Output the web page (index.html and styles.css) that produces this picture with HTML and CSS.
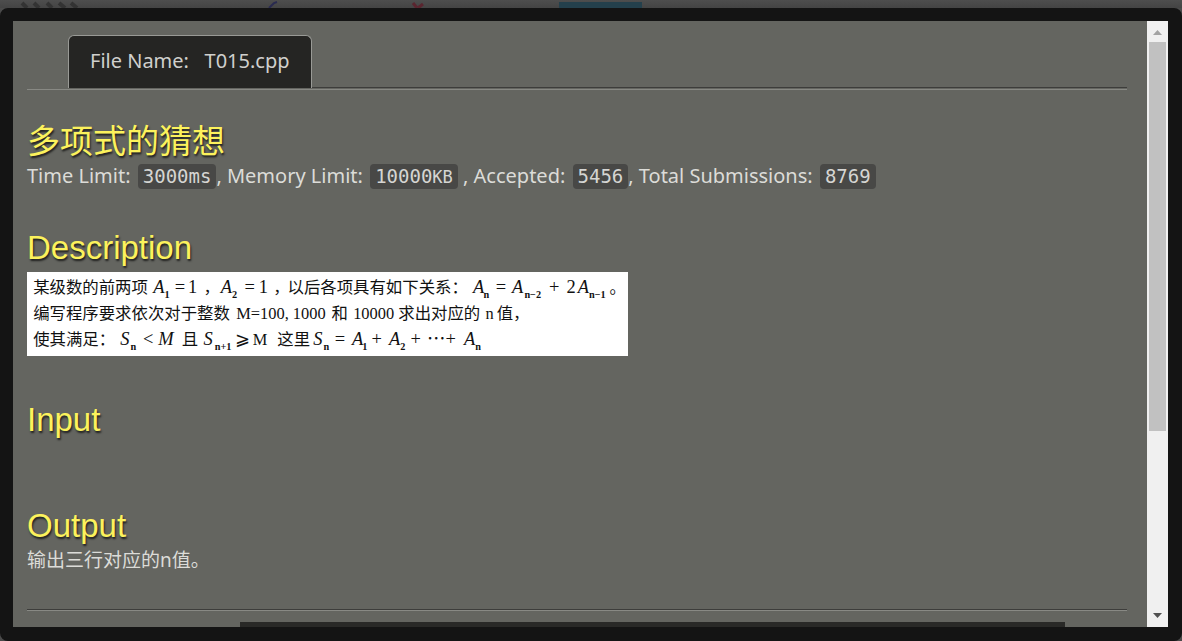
FILE: index.html
```html
<!DOCTYPE html>
<html lang="zh-CN">
<head>
<meta charset="utf-8">
<title>T015.cpp</title>
<link rel="stylesheet" href="styles.css">
</head>
<body>
<div class="backdrop" aria-hidden="true">
  <svg class="backdrop-art" width="700" height="8" viewBox="0 0 700 8">
    <path d="M22 3l5 5M34 3l5 5M47 3l5 5M59 3l6 5M71 3l6 5" stroke="#333" stroke-width="4"/>
    <path d="M269 8l5-5 3-1" stroke="#292a50" stroke-width="2" fill="none"/>
    <path d="M413 3l4 5M423 4l-5 4" stroke="#5a252f" stroke-width="3"/>
    <path d="M559 2h83v6h-83z" fill="#24404c"/>
  </svg>
</div>
<main class="modal" role="dialog" aria-label="T015.cpp">
  <div class="content">
    <nav class="tabs"><a class="tab" href="#problem">File Name:&nbsp;&nbsp; T015.cpp</a></nav>
    <section class="block" id="problem">
      <h1 class="heading">多项式的猜想</h1>
      <p class="text">Time Limit: <code class="code">3000ms</code>, Memory Limit: <code class="code">10000<span class="unit">KB</span></code> , Accepted: <code class="code">5456</code>, Total Submissions: <code class="code">8769</code></p>
    </section>
    <section class="block">
      <h2 class="heading">Description</h2>
      <svg class="formula" viewBox="0 0 586 82" role="img" aria-label="Description">
        <g transform="translate(0 20)">
          <text x="6">某级数的前两项</text>
          <text class="math" x="123">A</text><text class="sub" x="134" y="5">1</text>
          <text class="num" x="144">=</text><text class="num" x="157">1</text><text x="172">，</text>
          <text class="math" x="189">A</text><text class="sub" x="200" y="5">2</text>
          <text class="num" x="212">=</text><text class="num" x="226">1</text><text x="240">，</text>
          <text x="254">以后各项具有如下关系：</text>
          <text class="math" x="435">A</text><text class="sub" x="445" y="5">n</text>
          <text class="num" x="457">=</text>
          <text class="math" x="473">A</text><text class="sub" x="485" y="5">n−2</text>
          <text class="num" x="509">+</text><text class="num" x="526">2</text>
          <text class="math" x="537">A</text><text class="sub" x="548" y="5">n−1</text><text x="568">。</text>
        </g>
        <g transform="translate(0 46)">
          <text x="6">编写程序要求依次对于整数</text>
          <text class="latin" x="204">M=100, 1000</text><text x="297">和</text>
          <text class="latin" x="318">10000</text><text x="362">求出对应的</text>
          <text class="latin" x="447">n</text><text x="458">值，</text>
        </g>
        <g transform="translate(0 71)">
          <text x="6">使其满足：</text>
          <text class="math" x="91">S</text><text class="sub" x="101" y="5">n</text>
          <text class="num" x="113">&lt;</text><text class="math" x="128">M</text><text x="151">且</text>
          <text class="math" x="172">S</text><text class="sub" x="183" y="5">n+1</text>
          <text class="num" x="203">⩾</text><text class="latin" x="220">M</text><text x="244">这里</text>
          <text class="math" x="279">S</text><text class="sub" x="289" y="5">n</text>
          <text class="num" x="300">=</text>
          <text class="math" x="317">A</text><text class="sub" x="327" y="5">1</text>
          <text class="num" x="336">+</text>
          <text class="math" x="353">A</text><text class="sub" x="364" y="5">2</text>
          <text class="num" x="374">+</text><text class="num" x="390">⋯</text><text class="num" x="408">+</text>
          <text class="math" x="426">A</text><text class="sub" x="437" y="5">n</text>
        </g>
      </svg>
    </section>
    <section class="block">
      <h2 class="heading">Input</h2>
      <p class="text empty"></p>
    </section>
    <section class="block last">
      <h2 class="heading">Output</h2>
      <p class="text cjk">输出三行对应的n值。</p>
    </section>
    <hr class="rule">
    <div class="panel"></div>
  </div>
  <div class="scrollbar" aria-hidden="true">
    <svg class="arrow" viewBox="0 0 21 21"><path d="M6 14h9l-4.500-5z" fill="#a3a3a3"/></svg>
    <div class="track"><div class="thumb"></div></div>
    <svg class="arrow" viewBox="0 0 21 21"><path d="M6 7h9l-4.500 5z" fill="#505050"/></svg>
  </div>
</main>
</body>
</html>
```
FILE: styles.css
```css
* { box-sizing: border-box; }

body {
  margin: 0;
  height: 100vh;
  display: flex;
  flex-direction: column;
  background: #4a4a4a;
  color: #dcdcd8;
  font: 20px/26px "Noto Sans", "Noto Sans CJK SC", sans-serif;
  overflow: hidden;
}

.backdrop {
  height: 8px;
  flex: none;
  background: linear-gradient(#4e4e4e, #444);
}

.backdrop-art { display: block; }

.modal {
  flex: 1;
  min-height: 0;
  display: flex;
  border: 13px solid #141414;
  border-width: 13px 14px 14px 13px;
  border-radius: 8px;
  background: #646560;
}

.content {
  flex: 1;
  min-width: 0;
  padding: 14px 20px 0 14px;
  overflow: hidden;
}

.tabs {
  display: flex;
  padding: 0 0 1px 41px;
  border-bottom: 1px solid #888984;
  margin-bottom: 31px;
}

.tabs::after {
  content: "";
  flex: 1;
  border-bottom: 1px solid #3d3d3b;
}

.tab {
  padding: 12px 21px 14px;
  border: 1px solid #999a96;
  border-bottom: 0;
  border-radius: 6px 6px 0 0;
  background: #252523;
  color: #d0d0cd;
  text-decoration: none;
}

.block { margin-bottom: 38px; }
.last { margin-bottom: 36px; }

.heading {
  margin: 0;
  color: #fcf25c;
  font: 33px/42px "Liberation Sans", "Noto Sans CJK SC", sans-serif;
  text-shadow: 1px 2px 2px rgba(0, 0, 0, .7);
}

.text { margin: 0; }

.cjk { font-size: 19px; }

.empty { height: 26px; }

.code {
  margin-left: 2px;
  padding: 1px 5px 2px;
  border-radius: 4px;
  background: #484846;
  color: #d5d5d2;
  font: 19px/22px "DejaVu Sans Mono", monospace;
}

.unit { font-size: 17px; }

.formula {
  display: block;
  width: 601px;
  max-width: 100%;
  margin: 3px 0 43px;
  background: #fff;
  fill: #111;
  font: 16px "Noto Sans CJK SC", sans-serif;
}

.latin, .num, .math, .sub { font-family: "Liberation Serif", "DejaVu Serif", serif; }
.num, .math { font-size: 18px; }
.math { font-style: italic; }
.sub { font-size: 10px; font-weight: bold; }

.rule {
  margin: 0 0 11px;
  border: 0;
  border-top: 1px solid #3d3d3b;
  border-bottom: 1px solid #888984;
}

.panel {
  width: 75%;
  height: 40px;
  margin: 0 62px 0 auto;
  background: #292927;
}

.scrollbar {
  flex: none;
  width: 21px;
  display: flex;
  flex-direction: column;
  background: #f0f0f0;
}

.arrow { height: 21px; flex: none; }

.track { flex: 1; padding: 0 2px; }

.thumb { height: 69%; background: #c1c1c1; }
```
